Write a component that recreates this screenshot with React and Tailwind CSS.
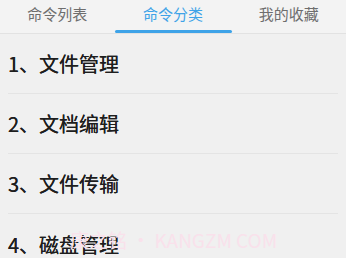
import React from 'react';

const tabs = ['命令列表', '命令分类', '我的收藏'];
const items = ['1、文件管理', '2、文档编辑', '3、文件传输', '4、磁盘管理'];

export default function App() {
  return (
    <div
      className="w-[346px] h-[258px] overflow-hidden bg-[#f0f0f0] relative"
      style={{ fontFamily: '"Noto Sans CJK SC", "Liberation Sans", sans-serif' }}
    >
      <div className="flex h-[34px] border-b border-[#e2e2e2] bg-[#f3f3f3]">
        {tabs.map((t, i) => (
          <div key={t} className="flex-1 flex flex-col items-center justify-between">
            <span
              className={`pt-[4px] text-[15px] leading-[20px] ${
                i === 1 ? 'text-[#3ea3e8]' : 'text-[#6e6e6e]'
              }`}
            >
              {t}
            </span>
            {i === 1 ? (
              <div className="w-[117px] h-[3px] rounded-full bg-[#3ea3e8]" />
            ) : (
              <div className="h-[3px]" />
            )}
          </div>
        ))}
      </div>
      <div className="flex flex-col">
        {items.map((t, i) => (
          <div key={t} className="px-2">
            <div
              className={`h-[60px] flex items-center text-[20px] text-[#1e1e1e] ${
                i < items.length - 1 ? 'border-b border-[#e4e4e4]' : ''
              }`}
            >
              <span className="pt-[1px] [text-shadow:0_0_0.4px_#1e1e1e]">{t}</span>
            </div>
          </div>
        ))}
      </div>
      <div className="absolute left-[70px] top-[226px] text-[19px] text-[#f9e1eb] pointer-events-none">
        康之铭 · KANGZM COM
      </div>
    </div>
  );
}
